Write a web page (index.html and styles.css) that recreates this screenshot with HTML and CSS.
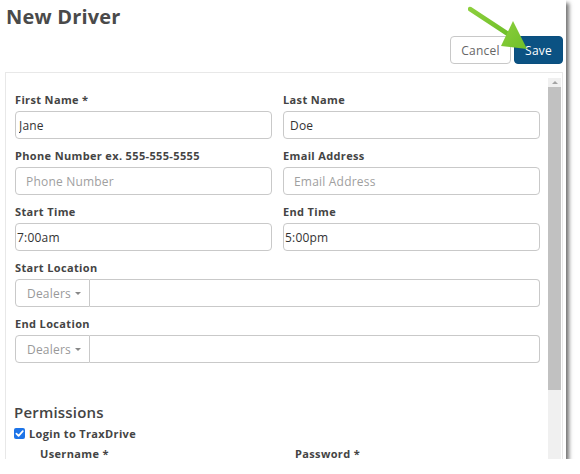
FILE: index.html
```html
<!DOCTYPE html>
<html>
<head>
<meta charset="utf-8">
<link rel="stylesheet" href="styles.css">
</head>
<body>
<div class="frame">
  <header class="top">
    <h1 class="title">New Driver</h1>
    <div class="actions">
      <button class="btn btn-cancel">Cancel</button>
      <button class="btn btn-save">Save</button>
    </div>
  </header>

  <div class="panel">
    <div class="panel-body">
      <div class="grid">
        <div class="field">
          <label class="label">First Name *</label>
          <input class="input pad-jane" value="Jane">
        </div>
        <div class="field">
          <label class="label">Last Name</label>
          <input class="input pad-doe" value="Doe">
        </div>
        <div class="field">
          <label class="label">Phone Number ex. 555-555-5555</label>
          <input class="input" placeholder="Phone Number">
        </div>
        <div class="field">
          <label class="label">Email Address</label>
          <input class="input" placeholder="Email Address">
        </div>
        <div class="field">
          <label class="label">Start Time</label>
          <input class="input pad-time" value="7:00am">
        </div>
        <div class="field">
          <label class="label">End Time</label>
          <input class="input pad-time" value="5:00pm">
        </div>
        <div class="field wide">
          <label class="label">Start Location</label>
          <div class="group">
            <span class="addon">Dealers <i class="caret"></i></span>
            <input class="input group-input">
          </div>
        </div>
        <div class="field wide">
          <label class="label">End Location</label>
          <div class="group">
            <span class="addon">Dealers <i class="caret"></i></span>
            <input class="input group-input">
          </div>
        </div>
      </div>

      <h2 class="section">Permissions</h2>
      <div class="check-row">
        <span class="check"><svg viewBox="0 0 12 12" width="12" height="12"><path d="M2.6 6.2 L5 8.6 L9.6 3.4" fill="none" stroke="#fff" stroke-width="1.9" stroke-linecap="round" stroke-linejoin="round"/></svg></span>
        <span class="check-label">Login to TraxDrive</span>
      </div>
      <div class="cred-row">
        <span class="label cred-user">Username *</span>
        <span class="label cred-pass">Password *</span>
      </div>
    </div>
    <div class="scrollbar">
      <span class="sb-arrow sb-up"></span>
      <span class="sb-thumb"></span>
      <span class="sb-track"></span>
      <span class="sb-arrow sb-down"></span>
    </div>
  </div>

  <svg class="pointer" width="80" height="60" viewBox="0 0 80 60">
    <defs>
      <linearGradient id="g" x1="0" y1="0" x2="1" y2="1">
        <stop offset="0" stop-color="#8ccf3c"/>
        <stop offset="1" stop-color="#6fbf2a"/>
      </linearGradient>
    </defs>
    <line x1="2" y1="5" x2="40" y2="30" stroke="url(#g)" stroke-width="4.5" stroke-linecap="round"/>
    <polygon points="33,42 45,17 59,45" fill="url(#g)"/>
  </svg>
</div>
</body>
</html>
```

FILE: styles.css
```css
html, body {
  margin: 0;
  padding: 0;
  background: #ffffff;
}
body {
  font-family: "Open Sans", "Liberation Sans", sans-serif;
  color: #444;
}
.frame {
  position: relative;
  width: 566px;
  height: 459px;
  background: #fff;
  overflow: hidden;
  box-shadow: 3px 3px 4px rgba(0, 0, 0, 0.55);
}
.top {
  display: flex;
  flex-direction: column;
  padding: 0 3px 0 6px;
}
.title {
  margin: 0;
  height: 34px;
  line-height: 34px;
  font-size: 20px;
  font-weight: 700;
  color: #4a4a4a;
  letter-spacing: 0.2px;
}
.actions {
  display: flex;
  justify-content: flex-end;
  gap: 3px;
  margin-top: 2px;
}
.btn {
  height: 28px;
  padding: 0;
  font-family: inherit;
  font-size: 12px;
  letter-spacing: 0.2px;
  border-radius: 4px;
}
.btn-cancel {
  width: 61px;
  border: 1px solid #c8c8c8;
  background: #fff;
  color: #666;
}
.btn-save {
  width: 49px;
  border: 1px solid #0a4f7e;
  background: #0b5283;
  color: #fff;
}
.panel {
  display: flex;
  margin: 8px 3px 0 5px;
  border: 1px solid #e8e8e8;
  border-bottom: none;
  height: 400px;
}
.panel-body {
  flex: 1;
  padding: 20px 0 0 9px;
}
.grid {
  display: grid;
  grid-template-columns: 257px 257px;
  column-gap: 11px;
}
.field {
  display: flex;
  flex-direction: column;
  margin-bottom: 10px;
}
.wide {
  grid-column: 1 / 3;
  width: 525px;
}
.label {
  font-size: 11px;
  line-height: 13px;
  font-weight: 700;
  letter-spacing: 0.35px;
  color: #444;
  margin-bottom: 5px;
}
.input {
  box-sizing: border-box;
  height: 28px;
  border: 1px solid #c9c9c9;
  border-radius: 4px;
  padding: 0 10px;
  font-family: inherit;
  font-size: 12px;
  letter-spacing: 0.2px;
  color: #333;
  background: #fff;
  outline: none;
}
.input::placeholder {
  color: #a0a0a0;
}
.pad-jane { padding-left: 3px; }
.pad-doe { padding-left: 6px; }
.pad-time { padding-left: 1px; }
.group {
  display: flex;
  height: 28px;
}
.addon {
  box-sizing: border-box;
  width: 75px;
  display: flex;
  align-items: center;
  gap: 4px;
  padding-left: 11px;
  border: 1px solid #c9c9c9;
  border-radius: 4px 0 0 4px;
  font-size: 12px;
  letter-spacing: 0.2px;
  color: #999;
}
.caret {
  width: 0;
  height: 0;
  border-left: 3px solid transparent;
  border-right: 3px solid transparent;
  border-top: 3px solid #888;
}
.group-input {
  flex: 1;
  border-left: none;
  border-radius: 0 4px 4px 0;
}
.section {
  margin: 30px 0 0 -1px;
  font-size: 15px;
  line-height: 18px;
  font-weight: 600;
  letter-spacing: 0.2px;
  color: #444;
}
.check-row {
  display: flex;
  align-items: center;
  gap: 4px;
  margin: 5px 0 0 -1px;
  height: 14px;
}
.check {
  width: 11px;
  height: 11px;
  border-radius: 2px;
  background: #1d74e8;
  display: flex;
  align-items: center;
  justify-content: center;
}
.check svg {
  width: 11px;
  height: 11px;
}
.check-label {
  font-size: 11px;
  font-weight: 700;
  letter-spacing: 0.35px;
  color: #444;
}
.cred-row {
  display: flex;
  margin-top: 7px;
}
.cred-user {
  width: 255px;
  padding-left: 25px;
}
.scrollbar {
  width: 13px;
  margin: 5px 1px 0 0;
  display: flex;
  flex-direction: column;
  align-items: center;
  background: #f0f0f0;
}
.sb-arrow {
  width: 0;
  height: 0;
  border-left: 3px solid transparent;
  border-right: 3px solid transparent;
  flex: none;
}
.sb-up {
  border-bottom: 3px solid #a3a3a3;
  margin: 3px 0 3px;
}
.sb-thumb {
  width: 13px;
  height: 303px;
  background: #c1c1c1;
  flex: none;
}
.sb-track {
  flex: 1;
}
.sb-down {
  border-top: 3px solid #505050;
  margin: 0 0 4px;
}
.pointer {
  position: absolute;
  left: 468px;
  top: 4px;
}
```
